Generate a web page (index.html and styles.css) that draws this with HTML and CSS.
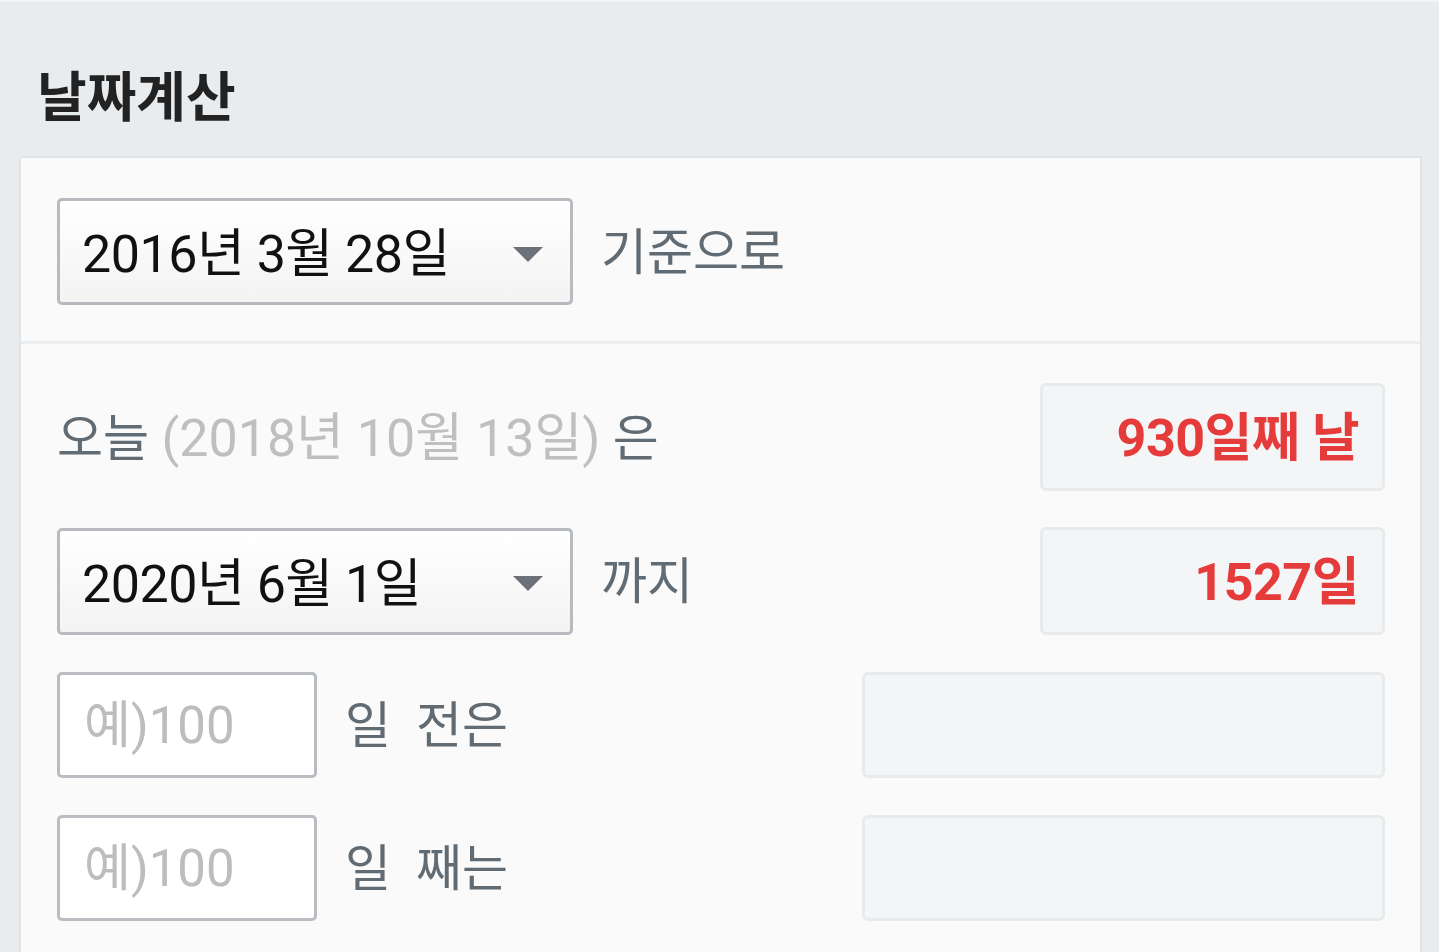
FILE: index.html
```html
<!DOCTYPE html>
<html lang="ko">
<head>
<meta charset="utf-8">
<title>날짜계산</title>
<link rel="stylesheet" href="styles.css">
</head>
<body>
<div class="page">
  <h1 class="title">날짜계산</h1>
  <div class="card">
    <div class="section top">
      <div class="row">
        <div class="select select-wide">
          <span class="select-text">2016년 3월 28일</span>
          <span class="arrow"></span>
        </div>
        <span class="label label-after">기준으로</span>
      </div>
    </div>
    <div class="section body">
      <div class="row">
        <span class="label">오늘 <span class="muted">(2018년 10월 13일)</span> 은</span>
        <div class="result result-narrow"><span class="value">930일째 날</span></div>
      </div>
      <div class="row">
        <div class="select select-wide">
          <span class="select-text">2020년 6월 1일</span>
          <span class="arrow"></span>
        </div>
        <span class="label label-after">까지</span>
        <div class="result result-narrow"><span class="value">1527일</span></div>
      </div>
      <div class="row">
        <div class="input"><span class="placeholder">예)100</span></div>
        <span class="label label-after2"><span class="il">일</span><span>전은</span></span>
        <div class="result result-wide"></div>
      </div>
      <div class="row">
        <div class="input"><span class="placeholder">예)100</span></div>
        <span class="label label-after2"><span class="il">일</span><span>째는</span></span>
        <div class="result result-wide"></div>
      </div>
    </div>
  </div>
</div>
</body>
</html>
```
FILE: styles.css
```css
html, body {
  margin: 0;
  padding: 0;
  background: #e9ecef;
  font-family: Roboto, "Noto Sans CJK KR", sans-serif;
}
.page {
  border-top: 2px solid #f2f4f6;
  padding: 0 17px 0 19px;
  height: 950px;
  overflow: hidden;
}
.title {
  margin: 0;
  padding: 62px 0 0 18px;
  height: 92px;
  font-size: 54px;
  font-weight: 700;
  color: #222;
  line-height: 70px;
  letter-spacing: 0;
}
.card {
  background: #fafafa;
  border: 2px solid #e2e5e8;
  border-bottom: none;
  height: 900px;
}
.section {
  padding: 0 35px 0 36px;
}
.section.top {
  padding-top: 40px;
  padding-bottom: 36px;
  border-bottom: 3px solid #eceef0;
}
.section.body {
  padding-top: 39px;
  display: flex;
  flex-direction: column;
  gap: 36px;
}
.row {
  display: flex;
  align-items: center;
  min-height: 107px;
}
.select {
  box-sizing: border-box;
  height: 107px;
  border: 3px solid #b7bbbf;
  border-radius: 5px;
  background: linear-gradient(#ffffff, #f3f3f3);
  display: flex;
  align-items: center;
  padding: 0 27px 0 22px;
}
.select-wide {
  width: 516px;
}
.select-text {
  flex: 1;
  font-size: 52px;
  color: #111;
  letter-spacing: -0.5px;
  margin-bottom: 4px;
}
.arrow {
  width: 0;
  height: 0;
  margin-top: 5px;
  border-left: 15px solid transparent;
  border-right: 15px solid transparent;
  border-top: 15px solid #6b7079;
}
.label {
  font-size: 50px;
  color: #606b73;
  letter-spacing: 0;
  margin-bottom: 8px;
}
.label-after {
  margin-left: 28px;
}
.label-after2 {
  margin-left: 28px;
  display: flex;
}
.label-after2 .il {
  margin-right: 25px;
}
.muted {
  color: #bfbfbf;
  font-size: 52px;
}
.result {
  box-sizing: border-box;
  margin-left: auto;
  height: 108px;
  border: 3px solid #e8ebed;
  border-radius: 6px;
  background: #f3f5f7;
  display: flex;
  align-items: center;
  justify-content: flex-end;
  padding-right: 23px;
}
.result-narrow {
  width: 345px;
}
.result-wide {
  width: 523px;
  height: 106px;
}
.value {
  font-size: 52px;
  font-weight: 700;
  color: #e63b3b;
  letter-spacing: -0.5px;
  margin-bottom: 8px;
}
.input {
  box-sizing: border-box;
  width: 260px;
  height: 106px;
  border: 3px solid #b9bdc1;
  border-radius: 5px;
  background: #fff;
  display: flex;
  align-items: center;
  padding-left: 24px;
}
.placeholder {
  font-size: 51px;
  color: #bdbdbd;
  letter-spacing: 0;
  margin-bottom: 8px;
}
```
